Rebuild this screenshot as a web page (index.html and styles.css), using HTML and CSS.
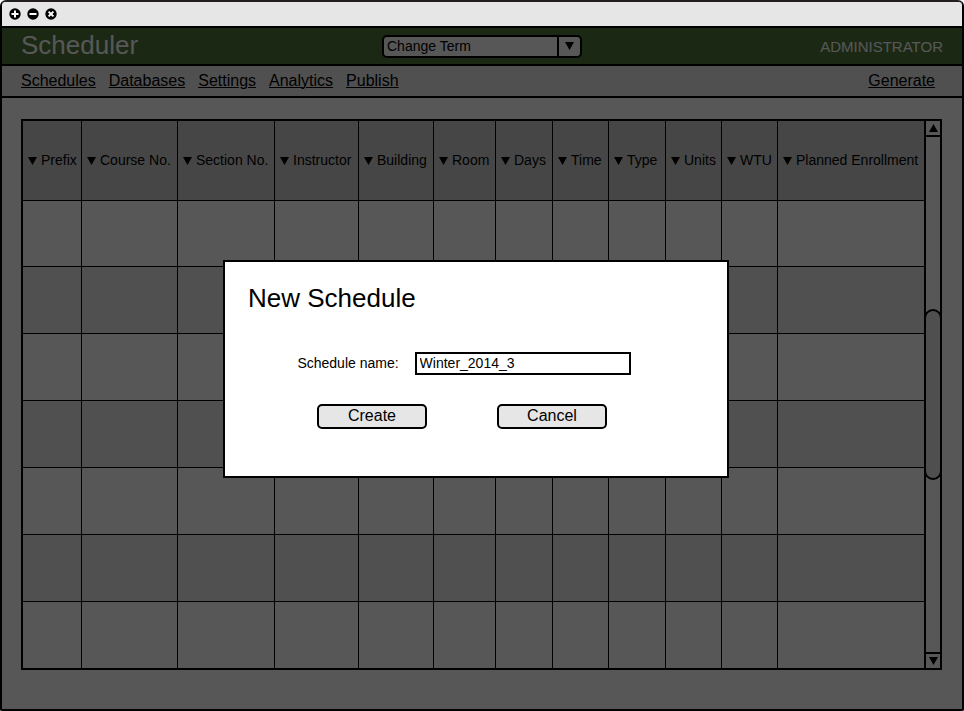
FILE: index.html
```html
<!DOCTYPE html>
<html lang="en">
<head>
<meta charset="utf-8">
<title>Scheduler</title>
<meta name="viewport" content="width=device-width, initial-scale=1">
<link rel="stylesheet" href="styles.css">
</head>
<body>
<svg class="sprite" aria-hidden="true">
  <symbol id="down" viewBox="0 0 9 8"><path d="M0 0H9L4.5 8Z"/></symbol>
  <symbol id="up" viewBox="0 0 9 8"><path d="M0 8H9L4.5 0Z"/></symbol>
</svg>
<div class="window">
  <div class="titlebar">
    <button type="button" aria-label="Maximize"><svg viewBox="0 0 12 12"><circle cx="6" cy="6" r="5.7"/><path d="M6 2.5V9.5M2.5 6H9.5"/></svg></button>
    <button type="button" aria-label="Minimize"><svg viewBox="0 0 12 12"><circle cx="6" cy="6" r="5.7"/><path d="M2.5 6H9.5"/></svg></button>
    <button type="button" aria-label="Close"><svg viewBox="0 0 12 12"><circle cx="6" cy="6" r="5.7"/><path d="M3.6 3.6L8.4 8.4M8.4 3.6L3.6 8.4"/></svg></button>
  </div>
  <div class="app">
    <header class="banner">
      <h1>Scheduler</h1>
      <div class="term">
        <select aria-label="Change Term"><option>Change Term</option></select>
        <span class="term-arrow"><svg class="tri"><use href="#down"/></svg></span>
      </div>
      <span class="user">ADMINISTRATOR</span>
    </header>
    <nav class="menu">
      <a href="#schedules">Schedules</a>
      <a href="#databases">Databases</a>
      <a href="#settings">Settings</a>
      <a href="#analytics">Analytics</a>
      <a href="#publish">Publish</a>
      <a class="generate" href="#generate">Generate</a>
    </nav>
    <main>
      <div class="panel">
        <table>
          <colgroup>
            <col class="w59"><col class="w96"><col class="w97"><col class="w84"><col class="w75"><col class="w62"><col class="w57"><col class="w56"><col class="w57"><col class="w56"><col class="w56"><col>
          </colgroup>
          <thead>
            <tr>
              <th><svg class="tri"><use href="#down"/></svg>Prefix</th>
              <th><svg class="tri"><use href="#down"/></svg>Course No.</th>
              <th><svg class="tri"><use href="#down"/></svg>Section No.</th>
              <th><svg class="tri"><use href="#down"/></svg>Instructor</th>
              <th><svg class="tri"><use href="#down"/></svg>Building</th>
              <th><svg class="tri"><use href="#down"/></svg>Room</th>
              <th><svg class="tri"><use href="#down"/></svg>Days</th>
              <th><svg class="tri"><use href="#down"/></svg>Time</th>
              <th><svg class="tri"><use href="#down"/></svg>Type</th>
              <th><svg class="tri"><use href="#down"/></svg>Units</th>
              <th><svg class="tri"><use href="#down"/></svg>WTU</th>
              <th><svg class="tri"><use href="#down"/></svg>Planned Enrollment</th>
            </tr>
          </thead>
          <tbody>
            <tr><td></td><td></td><td></td><td></td><td></td><td></td><td></td><td></td><td></td><td></td><td></td><td></td></tr>
            <tr><td></td><td></td><td></td><td></td><td></td><td></td><td></td><td></td><td></td><td></td><td></td><td></td></tr>
            <tr><td></td><td></td><td></td><td></td><td></td><td></td><td></td><td></td><td></td><td></td><td></td><td></td></tr>
            <tr><td></td><td></td><td></td><td></td><td></td><td></td><td></td><td></td><td></td><td></td><td></td><td></td></tr>
            <tr><td></td><td></td><td></td><td></td><td></td><td></td><td></td><td></td><td></td><td></td><td></td><td></td></tr>
            <tr><td></td><td></td><td></td><td></td><td></td><td></td><td></td><td></td><td></td><td></td><td></td><td></td></tr>
            <tr><td></td><td></td><td></td><td></td><td></td><td></td><td></td><td></td><td></td><td></td><td></td><td></td></tr>
          </tbody>
        </table>
        <div class="scroll">
          <button type="button" aria-label="Scroll up"><svg class="tri"><use href="#up"/></svg></button>
          <div class="track"><div class="thumb"></div></div>
          <button type="button" aria-label="Scroll down"><svg class="tri"><use href="#down"/></svg></button>
        </div>
      </div>
    </main>
    <div class="overlay">
      <form class="dialog" role="dialog" aria-labelledby="dialog-title">
        <h2 id="dialog-title">New Schedule</h2>
        <div class="field">
          <label for="name">Schedule name:</label>
          <input id="name" type="text" value="Winter_2014_3">
        </div>
        <div class="actions">
          <button type="button">Create</button>
          <button type="button">Cancel</button>
        </div>
      </form>
    </div>
  </div>
</div>
</body>
</html>
```
FILE: styles.css
```css
* { box-sizing: border-box; }

body {
  margin: 0;
  font: 14px/16px "Liberation Sans", Arial, sans-serif;
  color: #000;
  background: #fff;
}

button, input, select { font: inherit; color: inherit; margin: 0; }
h1, h2 { margin: 0; font-size: 26px; line-height: 30px; font-weight: 400; }

.sprite { position: absolute; width: 0; height: 0; }
.tri { width: 9px; height: 8px; flex: none; }

.window {
  min-height: 100vh;
  display: flex;
  flex-direction: column;
  border: 2px solid #000;
  border-top-color: #231f20;
  border-radius: 6px 6px 2px 2px;
  overflow: hidden;
}

.titlebar {
  height: 24px;
  display: flex;
  align-items: center;
  gap: 6px;
  padding: 0 7px;
  background: #e6e6e6;
}
.titlebar button { width: 12px; height: 12px; padding: 0; border: 0; background: none; }
.titlebar svg { display: block; width: 12px; height: 12px; }
.titlebar path { stroke: #fff; stroke-width: 2; fill: none; }

.app {
  position: relative;
  flex: 1;
  display: flex;
  flex-direction: column;
  border-top: 2px solid #000;
}

.banner {
  height: 38px;
  display: grid;
  grid-template-columns: 1fr 200px 1fr;
  align-items: center;
  padding: 0 19px;
  color: #fff;
  background: #4f7638;
  border-bottom: 2px solid #000;
}
.banner h1 { line-height: 28px; padding-bottom: 2px; }
.user { justify-self: end; padding-top: 2px; font-size: 15px; line-height: 18px; }

.term { position: relative; color: #000; }
.term select {
  display: block;
  width: 100%;
  height: 23px;
  padding: 0 24px 0 3px;
  appearance: none;
  background: #fff;
  border: 2px solid #000;
  border-radius: 5px;
}
.term-arrow {
  position: absolute;
  inset: 2px 2px 2px auto;
  width: 23px;
  display: flex;
  align-items: center;
  justify-content: center;
  border-left: 2px solid #000;
  pointer-events: none;
}

.menu {
  height: 32px;
  display: flex;
  align-items: center;
  gap: 13px;
  padding: 0 27px 0 19px;
  font-size: 16px;
  line-height: 18px;
  background: #ebebeb;
  border-bottom: 2px solid #000;
}
.menu a { color: #000; text-underline-offset: 1px; text-decoration-thickness: 1px; }
.generate { margin-left: auto; }

main { flex: 1; padding: 21px 20px 39px 19px; }
.panel { display: flex; border: 2px solid #000; background: #fff; }

table { flex: 1; table-layout: fixed; width: 0; border-spacing: 0; }
th, td { padding: 0; border: 0 solid #000; border-width: 0 1px 1px 0; }
th {
  height: 80px;
  padding: 0 0 2px 5px;
  font-weight: 400;
  text-align: left;
  white-space: nowrap;
  background: #cecece;
}
th .tri { margin-right: 4px; }
td { height: 67px; }
tr > :last-child { border-right: 0; }
tbody tr:first-child td,
tbody tr:last-child td { height: 66px; }
tbody tr:last-child td { border-bottom: 0; }
tbody tr:nth-child(even) { background: #ebebeb; }

.w56 { width: 56px; }
.w57 { width: 57px; }
.w59 { width: 59px; }
.w62 { width: 62px; }
.w75 { width: 75px; }
.w84 { width: 84px; }
.w96 { width: 96px; }
.w97 { width: 97px; }

.scroll { width: 16px; display: flex; flex-direction: column; border-left: 2px solid #000; }
.scroll button {
  height: 14px;
  display: flex;
  align-items: center;
  justify-content: center;
  padding: 0;
  border: 0;
  background: none;
}
.track {
  flex: 1;
  display: grid;
  grid-template-rows: 1fr 1fr 1fr;
  border: 0 solid #000;
  border-width: 2px 0;
}
.thumb { grid-row: 2; margin: 0 -2px; background: #e6e6e6; border: 2px solid #000; border-radius: 9px; }

.overlay {
  position: absolute;
  inset: 0;
  display: flex;
  align-items: center;
  justify-content: center;
  padding-right: 12px;
  background: rgba(0, 0, 0, .66);
}

.dialog {
  width: 506px;
  padding: 21px 47px 47px 23px;
  background: #fff;
  border: 2px solid #000;
}
.field { display: flex; align-items: center; justify-content: center; gap: 16px; margin-top: 39px; }
.field input {
  width: 216px;
  height: 23px;
  padding: 0 3px;
  background: #fff;
  border: 2px solid #000;
  border-radius: 0;
  outline: 0;
}
.actions { display: flex; justify-content: center; gap: 70px; margin-top: 29px; padding-right: 4px; }
.actions button {
  width: 110px;
  height: 25px;
  padding: 0;
  font-size: 16px;
  line-height: 18px;
  background: #e6e6e6;
  border: 2px solid #000;
  border-radius: 5px;
}
```
